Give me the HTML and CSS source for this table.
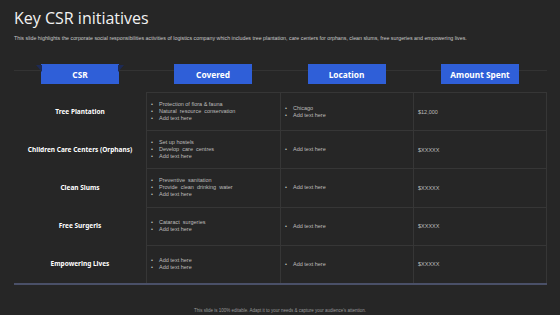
FILE: index.html
```html
<!DOCTYPE html>
<html lang="en">
<head>
  <meta charset="UTF-8">
  <title>Key CSR initiatives</title>
  <link rel="stylesheet" href="styles.css">
</head>
<body>
  <div class="slide">
    <h1>Key CSR initiatives</h1>
    <p class="lead">This slide highlights the corporate social responsibilities activities of logistics company which includes tree plantation, care centers for orphans, clean slums, free surgeries and empowering lives.</p>

    <div class="table">
      <div class="head">
        <div class="tab first"><span>CSR</span></div>
        <div class="tab"><span>Covered</span></div>
        <div class="tab"><span>Location</span></div>
        <div class="tab"><span>Amount Spent</span></div>
      </div>

      <div class="grid">
        <div class="name">Tree Plantation</div>
        <div class="cell"><ul><li>Protection of flora &amp; fauna</li><li>Natural  resource  conservation</li><li>Add text here</li></ul></div>
        <div class="cell"><ul><li>Chicago</li><li>Add text here</li></ul></div>
        <div class="cell last">$12,000</div>

        <div class="name">Children Care Centers (Orphans)</div>
        <div class="cell"><ul><li>Set up hostels</li><li>Develop  care  centres</li><li>Add text here</li></ul></div>
        <div class="cell"><ul><li>Add text here</li></ul></div>
        <div class="cell last">$XXXXX</div>

        <div class="name">Clean Slums</div>
        <div class="cell"><ul><li>Preventive  sanitation</li><li>Provide  clean  drinking  water</li><li>Add text here</li></ul></div>
        <div class="cell"><ul><li>Add text here</li></ul></div>
        <div class="cell last">$XXXXX</div>

        <div class="name">Free Surgeris</div>
        <div class="cell"><ul><li>Cataract  surgeries</li><li>Add text here</li></ul></div>
        <div class="cell"><ul><li>Add text here</li></ul></div>
        <div class="cell last">$XXXXX</div>

        <div class="name">Empowering Lives</div>
        <div class="cell"><ul><li>Add text here</li><li>Add text here</li></ul></div>
        <div class="cell"><ul><li>Add text here</li></ul></div>
        <div class="cell last">$XXXXX</div>
      </div>
    </div>

    <p class="foot">This slide is 100% editable. Adapt it to your needs &amp; capture your audience's attention.</p>
  </div>
</body>
</html>
```

FILE: styles.css
```css
body {
  margin: 0;
  background: #262626;
  font-family: "Open Sans", sans-serif;
}
.slide {
  width: 560px;
  height: 315px;
  padding: 0 0 0 14px;
  box-sizing: border-box;
  position: relative;
}
h1 {
  margin: 0;
  padding-top: 7px;
  font-size: 16px;
  font-weight: 400;
  line-height: 22px;
  color: #f2f2f2;
}
.lead {
  margin: 6px 0 0;
  font-family: "Liberation Sans", Arial, sans-serif;
  font-size: 5.3px;
  line-height: 6px;
  color: #c8c8c8;
}
.table {
  width: 533px;
  margin-top: 23px;
}
.head {
  display: grid;
  grid-template-columns: 132px 134px 133px 134px;
  height: 28px;
  align-items: start;
  background: linear-gradient(#333, #333) 0 6px / 100% 1px no-repeat;
}
.tab {
  display: flex;
  justify-content: center;
}
.tab span {
  width: 78px;
  height: 20px;
  background: #2f5fd8;
  color: #fff;
  font-family: "Noto Sans", sans-serif;
  font-weight: 700;
  font-size: 8.3px;
  display: flex;
  align-items: center;
  justify-content: center;
  position: relative;
}
.tab.first span::before,
.tab.first span::after {
  content: "";
  position: absolute;
  top: 1px;
  width: 6px;
  height: 7px;
  background: #1d2a55;
}
.tab.first span::before {
  left: -5px;
  clip-path: polygon(0 0, 100% 0, 100% 100%);
}
.tab.first span::after {
  right: -5px;
  clip-path: polygon(0 0, 100% 0, 0 100%);
}
.grid {
  display: grid;
  grid-template-columns: 132px 134px 133px 134px;
  grid-auto-rows: 38.2px;
  border-bottom: 2px solid #4a5068;
}
.name {
  display: flex;
  align-items: center;
  justify-content: center;
  font-family: "Noto Sans", sans-serif;
  font-weight: 700;
  font-size: 6.5px;
  color: #fff;
}
.cell {
  display: flex;
  align-items: center;
  border-left: 1px solid #363636;
  border-top: 1px solid #363636;
  padding-left: 4px;
  font-family: "Liberation Sans", Arial, sans-serif;
  font-size: 5.5px;
  color: #bdbdbd;
}
.cell.last {
  border-right: 1px solid #363636;
}
.cell ul {
  margin: 0;
  padding: 0;
  list-style: none;
}
.cell li {
  line-height: 7px;
  padding-left: 8px;
  position: relative;
  white-space: pre;
}
.cell li::before {
  content: "•";
  position: absolute;
  left: 0;
}
.foot {
  margin: 0;
  position: absolute;
  left: 0;
  right: 0;
  bottom: 2px;
  text-align: center;
  font-family: "Liberation Sans", Arial, sans-serif;
  font-size: 4.5px;
  color: #9a9a9a;
}
```
